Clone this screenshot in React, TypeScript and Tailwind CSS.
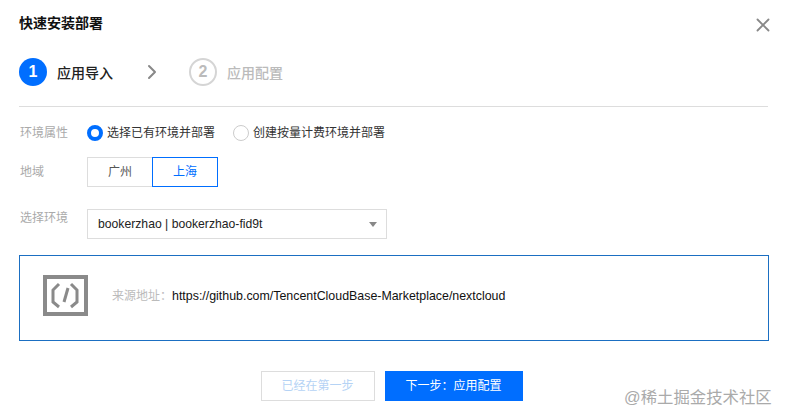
import { ChevronRight, X } from 'lucide-react';

export default function App() {
  return (
    <div className="relative flex h-[420px] w-[785px] flex-col bg-white px-[19px] pt-[14px] font-['Liberation_Sans','Noto_Sans_CJK_SC',sans-serif] text-xs text-[#222]">
      {/* header */}
      <div className="flex h-[18px] items-center justify-between">
        <h1 className="text-sm font-bold leading-[18px] text-[#111]">快速安装部署</h1>
        <X className="mr-[-8px] mt-[4px] text-[#888]" size={22} strokeWidth={2} />
      </div>

      {/* steps */}
      <div className="mt-[26px] flex h-[28px] items-center">
        <span className="flex h-[28px] w-[28px] items-center justify-center rounded-full bg-[#006eff] text-base font-bold text-white">1</span>
        <span className="ml-[10px] mt-[2px] text-sm font-medium text-[#222]">应用导入</span>
        <ChevronRight className="ml-[27px] text-[#888]" size={24} strokeWidth={2} />
        <span className="ml-[25px] flex h-[28px] w-[28px] items-center justify-center rounded-full border-2 border-[#d5d5d5] text-base font-bold text-[#bbb]">2</span>
        <span className="ml-[10px] mt-[2px] text-sm font-medium text-[#bbb]">应用配置</span>
      </div>

      <div className="mt-[20px] h-px w-[749px] bg-[#ddd]" />

      {/* form */}
      <div className="mt-[17px] flex h-[18px] items-center">
        <span className="w-[68px] pl-px text-[#aaa]">环境属性</span>
        <span className="h-4 w-4 rounded-full border-[4px] border-[#006eff] bg-white" />
        <span className="ml-[4px] text-[#333]">选择已有环境并部署</span>
        <span className="ml-[18px] h-4 w-4 rounded-full border border-[#ccc] bg-white" />
        <span className="ml-[4px] text-[#333]">创建按量计费环境并部署</span>
      </div>

      <div className="mt-[15px] flex h-[30px] items-center">
        <span className="w-[68px] pl-px text-[#aaa]">地域</span>
        <button className="h-[30px] w-[65px] border border-r-0 border-[#ddd] text-[#555]">广州</button>
        <button className="h-[30px] w-[66px] border border-[#006eff] text-[#006eff]">上海</button>
      </div>

      <div className="mt-[22px] flex h-[30px] items-center">
        <span className="mt-[-12px] w-[68px] pl-px text-[#aaa]">选择环境</span>
        <div className="flex h-[30px] w-[300px] items-center justify-between border border-[#ddd] pl-[10px] pr-[9px] text-[12.2px] text-[#222]">
          <span>bookerzhao | bookerzhao-fid9t</span>
          <span className="h-0 w-0 border-x-[4px] border-t-[5px] border-x-transparent border-t-[#888]" />
        </div>
      </div>

      {/* source card */}
      <div className="mt-[16px] flex h-[86px] w-[750px] items-center border border-[#1b6fc2] pb-[4px] pl-[23px]">
        <svg width="45" height="41" viewBox="0 0 45 41" className="mt-[-1px] shrink-0">
          <rect x="2" y="2" width="41" height="37" fill="none" stroke="#8a8a8a" strokeWidth="4" />
          <path d="M16 9l-6 6v12l6 5M28 9l6 6v12l-6 5" fill="none" stroke="#8a8a8a" strokeWidth="3" />
          <path d="M25 13l-4 14" fill="none" stroke="#8a8a8a" strokeWidth="3" />
        </svg>
        <span className="ml-[24px] text-[#bbb]">来源地址：</span>
        <span className="text-[12.4px] text-[#111]">https://github.com/TencentCloudBase-Marketplace/nextcloud</span>
      </div>

      {/* footer */}
      <div className="mt-[30px] flex justify-center gap-[10px] pr-[2px]">
        <button className="h-[30px] w-[114px] border border-[#ddd] text-[#b5d3f5]">已经在第一步</button>
        <button className="h-[30px] w-[138px] bg-[#006eff] text-white">下一步：应用配置</button>
      </div>

      {/* watermark */}
      <span className="absolute left-[624px] top-[387px] text-[16.4px] leading-[20px] text-[#aaa]">@稀土掘金技术社区</span>
    </div>
  );
}
